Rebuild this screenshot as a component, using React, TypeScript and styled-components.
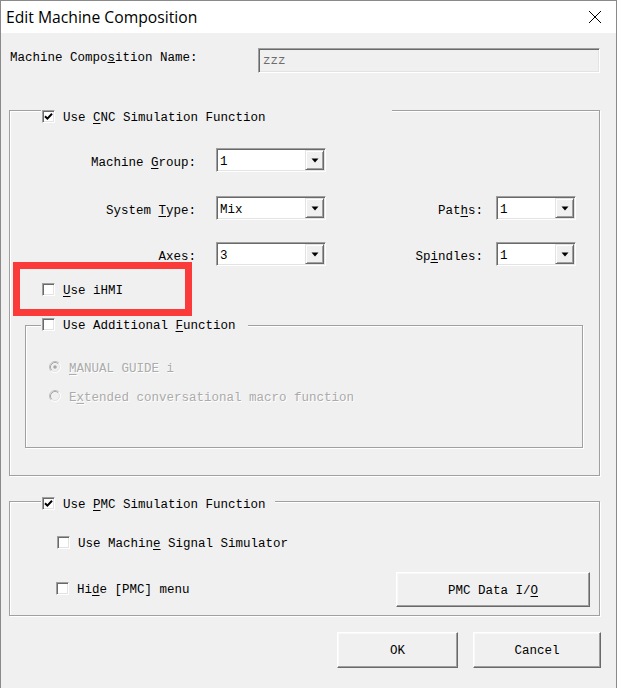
import React from "react";
import styled, { createGlobalStyle } from "styled-components";

const Global = createGlobalStyle`
  html, body { margin: 0; padding: 0; background: #ffffff; }
  #root { width: 617px; height: 688px; }
`;

const MONO = `"Liberation Mono", "DejaVu Sans Mono", monospace`;

const Window = styled.div`
  position: relative;
  width: 617px;
  height: 688px;
  box-sizing: border-box;
  border: 1px solid #8a8a8a;
  border-bottom: none;
  background: #f0f0f0;
  display: flex;
  flex-direction: column;
  font-family: ${MONO};
  font-size: 12.5px;
  color: #000;
  overflow: hidden;
`;

const TitleBar = styled.div`
  height: 32px;
  flex: none;
  background: #ffffff;
  display: flex;
  align-items: center;
  padding-left: 5px;
`;

const TitleText = styled.div`
  flex: 1;
  font-family: "Open Sans", "Noto Sans", sans-serif;
  font-size: 15.7px;
  color: #000;
  padding-bottom: 1px;
`;

const CloseBox = styled.div`
  width: 40px;
  height: 32px;
  display: flex;
  align-items: center;
  justify-content: center;
  margin-right: 1px;
`;

const Body = styled.div`
  flex: 1;
  display: flex;
  flex-direction: column;
  padding: 0 16px 0 8px;
`;

const NameRow = styled.div`
  display: flex;
  align-items: center;
  height: 25px;
  margin-top: 15px;
`;

const NameLabel = styled.div`
  width: 248px;
  padding-left: 1px;
  padding-bottom: 6px;
  white-space: pre;
`;

const TextBox = styled.div`
  width: 342px;
  height: 25px;
  box-sizing: border-box;
  background: #f0f0f0;
  border: 1px solid;
  border-color: #a0a0a0 #ffffff #ffffff #a0a0a0;
  box-shadow: inset 1px 1px 0 #696969, inset -1px -1px 0 #e3e3e3;
  display: flex;
  align-items: center;
  padding: 0 4px;
  color: #6d6d6d;
`;

const Group = styled.div<{ $h: number; $mt: number; $ml?: number; $mr?: number }>`
  position: relative;
  flex: none;
  box-sizing: border-box;
  height: ${(p) => p.$h}px;
  margin-top: ${(p) => p.$mt}px;
  margin-left: ${(p) => p.$ml ?? 0}px;
  margin-right: ${(p) => p.$mr ?? 0}px;
  border: 1px solid #a0a0a0;
  box-shadow: inset 1px 1px 0 #ffffff, 1px 1px 0 #ffffff;
  display: flex;
  flex-direction: column;
`;

const GroupHeader = styled.div<{ $top: number; $left: number; $w: number }>`
  position: absolute;
  top: ${(p) => p.$top}px;
  left: ${(p) => p.$left}px;
  width: ${(p) => p.$w}px;
  height: 14px;
  background: #f0f0f0;
  display: flex;
  align-items: center;
  gap: 8px;
  padding-left: 1px;
  box-sizing: border-box;
`;

const CheckRow = styled.div<{ $mt: number; $ml: number }>`
  display: flex;
  align-items: center;
  gap: 8px;
  height: 14px;
  margin-top: ${(p) => p.$mt}px;
  margin-left: ${(p) => p.$ml}px;
`;

const Box = styled.span`
  width: 13px;
  height: 13px;
  flex: none;
  box-sizing: border-box;
  background: #ffffff;
  border: 1px solid;
  border-color: #a0a0a0 #ffffff #ffffff #a0a0a0;
  box-shadow: inset 1px 1px 0 #696969, inset -1px -1px 0 #e3e3e3;
  display: inline-flex;
  align-items: center;
  justify-content: center;
`;

const Label = styled.span<{ $disabled?: boolean }>`
  white-space: pre;
  line-height: 14px;
  padding-top: 3px;
  color: ${(p) => (p.$disabled ? "#ababab" : "#000")};
  text-shadow: ${(p) => (p.$disabled ? "1px 1px 0 #ffffff" : "none")};
  u {
    text-decoration: underline;
    text-underline-offset: 2px;
  }
`;

const FieldRow = styled.div<{ $mt: number }>`
  display: grid;
  grid-template-columns: 206px 110px 170px 80px;
  align-items: center;
  height: 24px;
  margin-top: ${(p) => p.$mt}px;
`;

const FieldLabel = styled.span<{ $pr: number }>`
  text-align: right;
  padding-right: ${(p) => p.$pr}px;
  padding-top: 5px;
  white-space: pre;
  u {
    text-decoration: underline;
    text-underline-offset: 2px;
  }
`;

const ComboBox = styled.div`
  height: 24px;
  box-sizing: border-box;
  background: #ffffff;
  border: 1px solid;
  border-color: #a0a0a0 #ffffff #ffffff #a0a0a0;
  box-shadow: inset 1px 1px 0 #696969, inset -1px -1px 0 #e3e3e3;
  padding: 1px;
  display: flex;
  align-items: stretch;
`;

const ComboValue = styled.span`
  flex: 1;
  display: flex;
  align-items: center;
  padding-left: 2px;
  padding-top: 3px;
`;

const DropButton = styled.span`
  width: 19px;
  box-sizing: border-box;
  background: #f0f0f0;
  border: 1px solid;
  border-color: #e3e3e3 #696969 #696969 #e3e3e3;
  box-shadow: inset 1px 1px 0 #ffffff, inset -1px -1px 0 #a0a0a0;
  display: flex;
  align-items: center;
  justify-content: center;
`;

const RadioRow = styled.div<{ $mt: number }>`
  display: flex;
  align-items: center;
  gap: 8px;
  height: 14px;
  margin-top: ${(p) => p.$mt}px;
  margin-left: 23px;
`;

const PmcRow = styled.div`
  display: flex;
  align-items: flex-start;
  justify-content: space-between;
  margin-top: 23px;
  padding: 0 9px 0 46px;
`;

const Button = styled.div<{ $w: number; $h: number }>`
  width: ${(p) => p.$w}px;
  height: ${(p) => p.$h}px;
  box-sizing: border-box;
  background: #f0f0f0;
  border: 1px solid;
  border-color: #ffffff #696969 #696969 #ffffff;
  box-shadow: inset -1px -1px 0 #a0a0a0, inset 1px 1px 0 #f8f8f8;
  display: flex;
  align-items: center;
  justify-content: center;
  padding-top: 2px;
  white-space: pre;
  u {
    text-decoration: underline;
    text-underline-offset: 2px;
  }
`;

const ButtonBar = styled.div`
  display: flex;
  justify-content: flex-end;
  gap: 15px;
  margin: 16px -1px 0 0;
`;

const Highlight = styled.div`
  position: absolute;
  left: 12px;
  top: 261px;
  width: 179px;
  height: 54px;
  box-sizing: border-box;
  border: 7px solid #fb3a3a;
  pointer-events: none;
`;

const Check = ({ checked }: { checked?: boolean }) => (
  <Box>
    {checked && (
      <svg width="9" height="9" viewBox="0 0 9 9">
        <path d="M1 4.2 L3.4 6.6 L8 1.8" fill="none" stroke="#000" strokeWidth="2" />
      </svg>
    )}
  </Box>
);

const Radio = ({ selected }: { selected?: boolean }) => (
  <svg width="12" height="12" viewBox="0 0 12 12" style={{ flex: "none" }}>
    <circle cx="6" cy="6" r="5" fill="#f0f0f0" />
    <path d="M2.11 9.89 A5.5 5.5 0 0 1 9.89 2.11" fill="none" stroke="#bdbdbd" strokeWidth="1" />
    <path d="M2.82 9.18 A4.5 4.5 0 0 1 9.18 2.82" fill="none" stroke="#a8a8a8" strokeWidth="1" />
    <path d="M9.89 2.11 A5.5 5.5 0 0 1 2.11 9.89" fill="none" stroke="#ffffff" strokeWidth="1" />
    <path d="M9.18 2.82 A4.5 4.5 0 0 1 2.82 9.18" fill="none" stroke="#e3e3e3" strokeWidth="1" />
    {selected && <circle cx="6" cy="6" r="1.8" fill="#a8a8a8" />}
  </svg>
);

const Combo = ({ value }: { value: string }) => (
  <ComboBox>
    <ComboValue>{value}</ComboValue>
    <DropButton>
      <svg width="8" height="5" viewBox="0 0 8 5">
        <path d="M0.5 0.5 H7.5 L4 4.5 Z" fill="#000" />
      </svg>
    </DropButton>
  </ComboBox>
);

export default function App() {
  return (
    <>
      <Global />
      <Window>
        <TitleBar>
          <TitleText>Edit Machine Composition</TitleText>
          <CloseBox>
            <svg width="14" height="14" viewBox="0 0 14 14">
              <path d="M1 1 L13 13 M13 1 L1 13" stroke="#000" strokeWidth="1" />
            </svg>
          </CloseBox>
        </TitleBar>
        <Body>
          <NameRow>
            <NameLabel>
              Machine Compo<u>s</u>ition Name:
            </NameLabel>
            <TextBox>zzz</TextBox>
          </NameRow>

          <Group $h={366} $mt={37}>
            <GroupHeader $top={-2} $left={31} $w={351}>
              <Check checked />
              <Label>
                Use <u>C</u>NC Simulation Function
              </Label>
            </GroupHeader>
            <FieldRow $mt={37}>
              <FieldLabel $pr={20}>
                Machine <u>G</u>roup:
              </FieldLabel>
              <Combo value="1" />
            </FieldRow>
            <FieldRow $mt={24}>
              <FieldLabel $pr={20}>
                System <u>T</u>ype:
              </FieldLabel>
              <Combo value="Mix" />
              <FieldLabel $pr={13}>
                Pat<u>h</u>s:
              </FieldLabel>
              <Combo value="1" />
            </FieldRow>
            <FieldRow $mt={22}>
              <FieldLabel $pr={20}>
                <u>A</u>xes:
              </FieldLabel>
              <Combo value="3" />
              <FieldLabel $pr={13}>
                Sp<u>i</u>ndles:
              </FieldLabel>
              <Combo value="1" />
            </FieldRow>
            <CheckRow $mt={16} $ml={32}>
              <Check />
              <Label>
                <u>U</u>se iHMI
              </Label>
            </CheckRow>
            <Group $h={123} $mt={29} $ml={15} $mr={16}>
              <GroupHeader $top={-9} $left={15} $w={207}>
                <Check />
                <Label>
                  Use Additional <u>F</u>unction
                </Label>
              </GroupHeader>
              <RadioRow $mt={34}>
                <Radio selected />
                <Label $disabled>
                  <u>M</u>ANUAL GUIDE i
                </Label>
              </RadioRow>
              <RadioRow $mt={15}>
                <Radio />
                <Label $disabled>
                  E<u>x</u>tended conversational macro function
                </Label>
              </RadioRow>
            </Group>
          </Group>

          <Group $h={115} $mt={25}>
            <GroupHeader $top={-6} $left={31} $w={234}>
              <Check checked />
              <Label>
                Use <u>P</u>MC Simulation Function
              </Label>
            </GroupHeader>
            <CheckRow $mt={33} $ml={47}>
              <Check />
              <Label>
                Use Machin<u>e</u> Signal Simulator
              </Label>
            </CheckRow>
            <PmcRow>
              <CheckRow $mt={9} $ml={0}>
                <Check />
                <Label>
                  Hi<u>d</u>e [PMC] menu
                </Label>
              </CheckRow>
              <Button $w={194} $h={35}>
                PMC Data I/<u>O</u>
              </Button>
            </PmcRow>
          </Group>

          <ButtonBar>
            <Button $w={121} $h={36}>OK</Button>
            <Button $w={128} $h={36}>Cancel</Button>
          </ButtonBar>
        </Body>
        <Highlight />
      </Window>
    </>
  );
}
